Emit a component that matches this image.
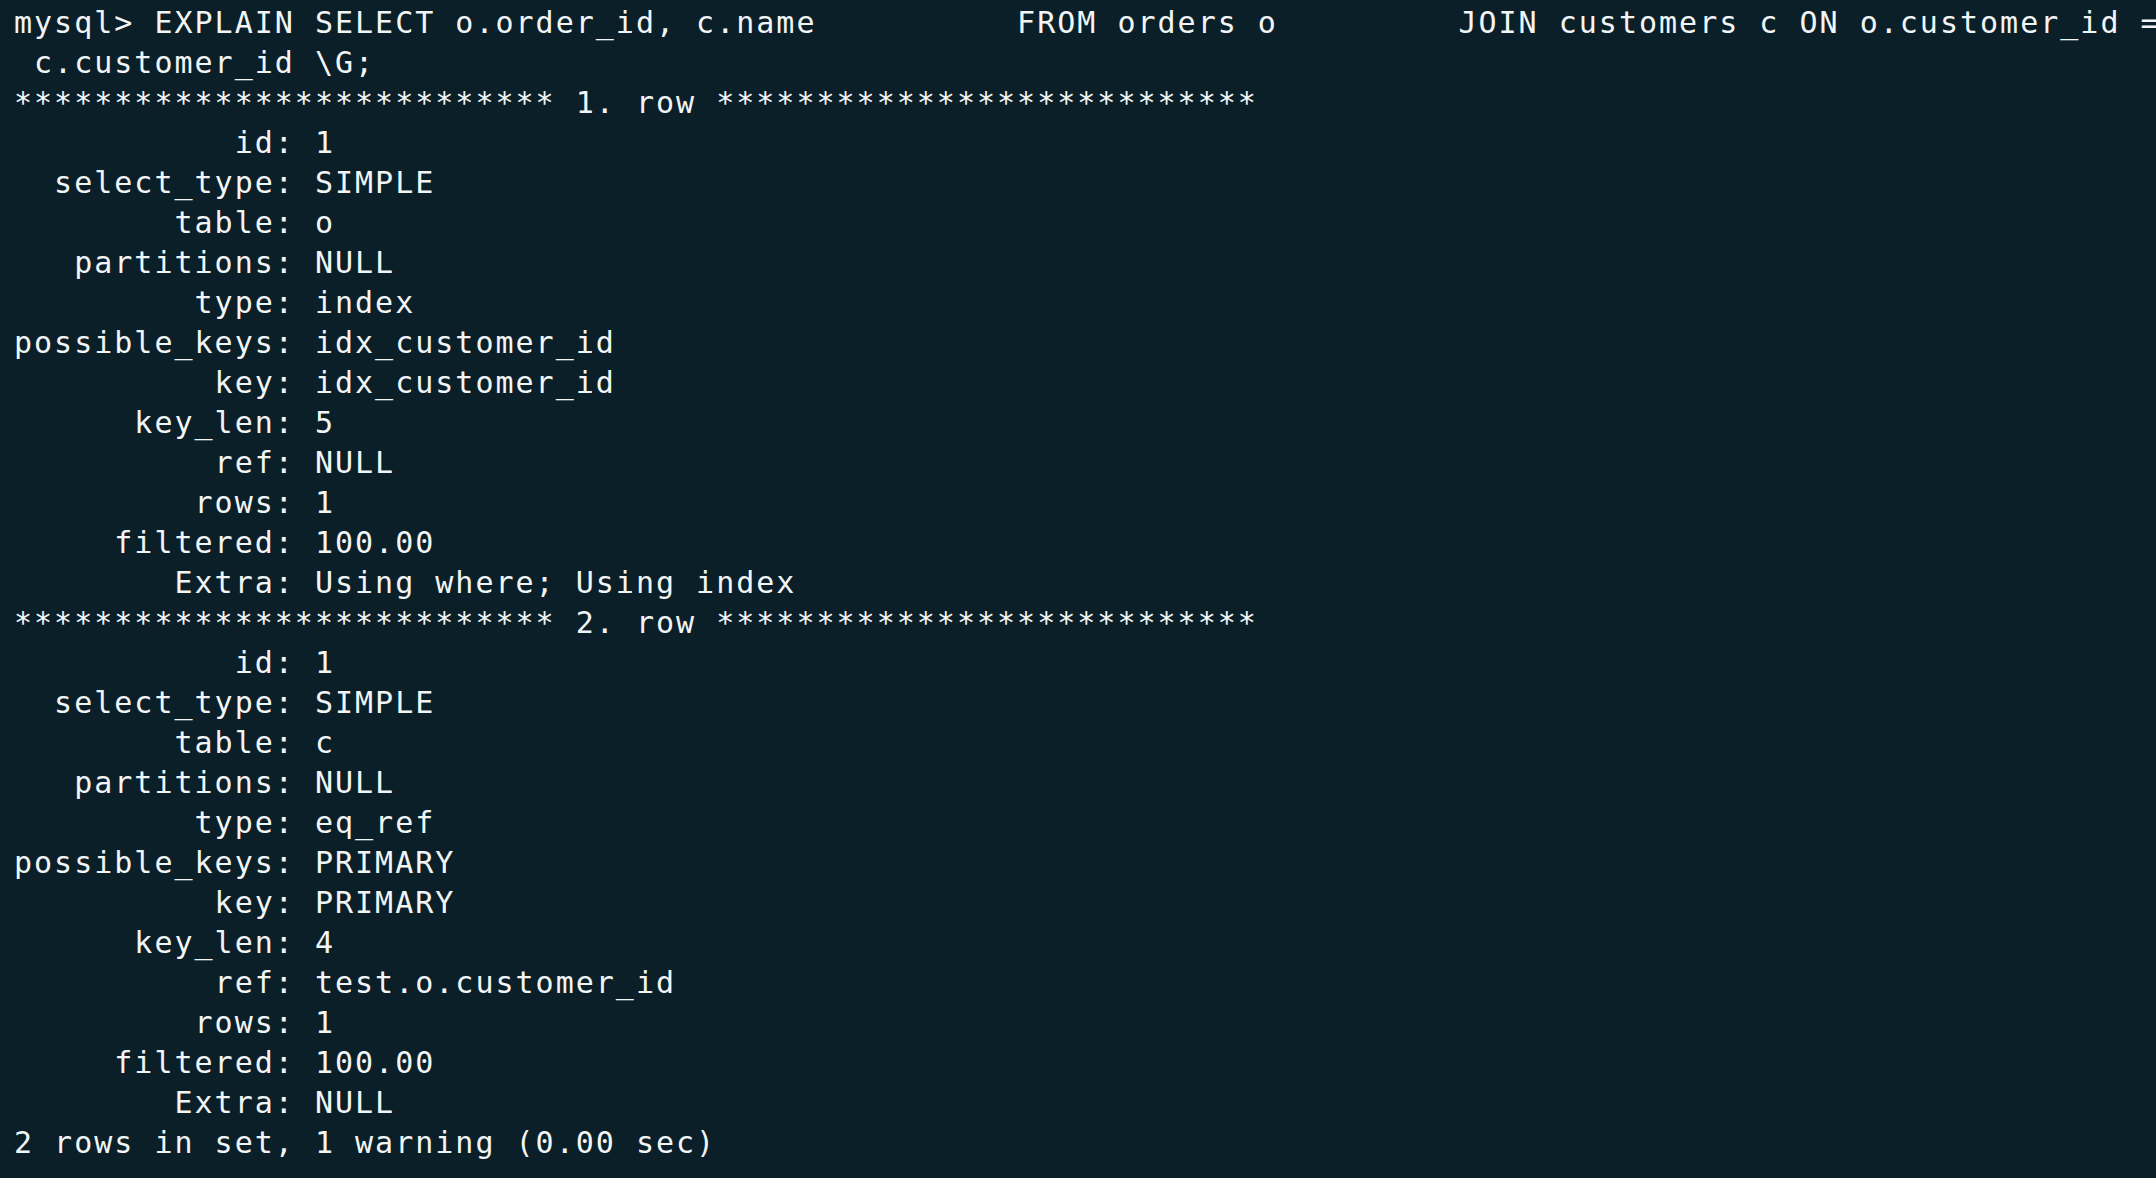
import React from "react";

const lines: string[] = [
  "mysql> EXPLAIN SELECT o.order_id, c.name          FROM orders o         JOIN customers c ON o.customer_id =",
  " c.customer_id \\G;",
  "*************************** 1. row ***************************",
  "           id: 1",
  "  select_type: SIMPLE",
  "        table: o",
  "   partitions: NULL",
  "         type: index",
  "possible_keys: idx_customer_id",
  "          key: idx_customer_id",
  "      key_len: 5",
  "          ref: NULL",
  "         rows: 1",
  "     filtered: 100.00",
  "        Extra: Using where; Using index",
  "*************************** 2. row ***************************",
  "           id: 1",
  "  select_type: SIMPLE",
  "        table: c",
  "   partitions: NULL",
  "         type: eq_ref",
  "possible_keys: PRIMARY",
  "          key: PRIMARY",
  "      key_len: 4",
  "          ref: test.o.customer_id",
  "         rows: 1",
  "     filtered: 100.00",
  "        Extra: NULL",
  "2 rows in set, 1 warning (0.00 sec)",
];

export default function App() {
  return (
    <div className="w-[2156px] h-[1178px] overflow-hidden bg-[#0b1f29] text-[#f2f5f6] pt-[3px] pl-[14px] font-['DejaVu_Sans_Mono',monospace] text-[30px] leading-[40px] tracking-[2px]">
      {lines.map((l, i) => (
        <div key={i} className="whitespace-pre">
          {l}
        </div>
      ))}
    </div>
  );
}
